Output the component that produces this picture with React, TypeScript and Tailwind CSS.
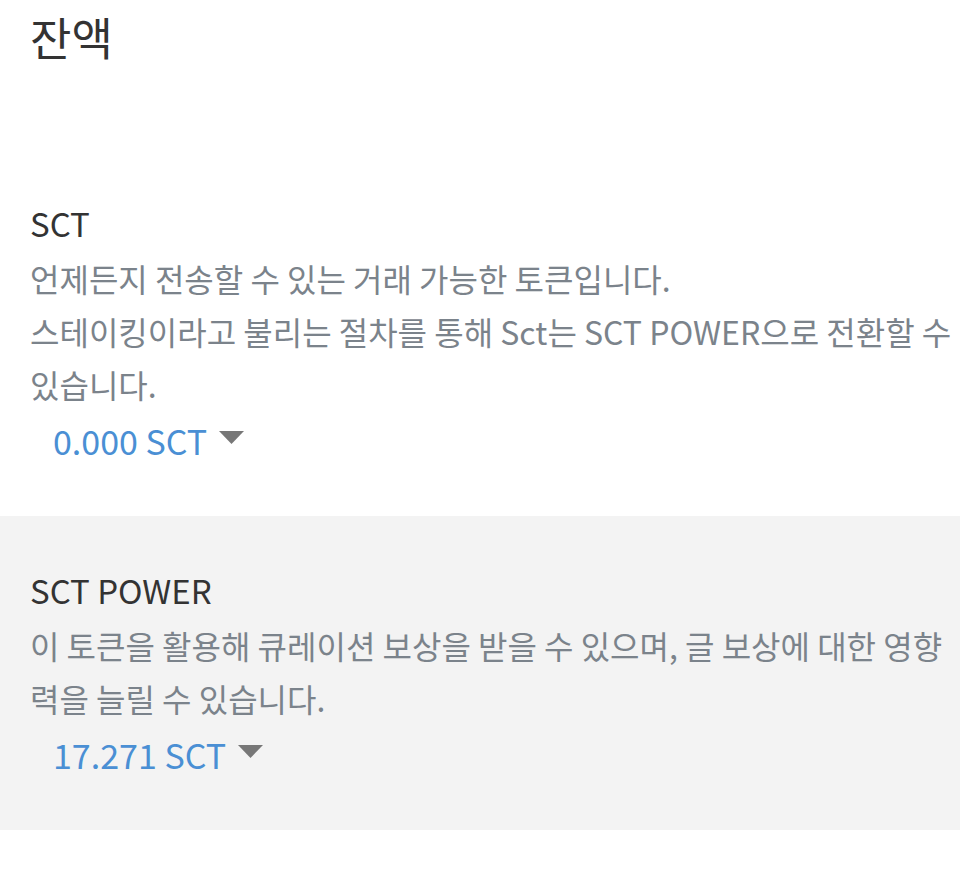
import React from 'react';

interface TokenBalance {
  name: string;
  lines: string[];
  amount: string;
  shaded?: boolean;
}

const balances: TokenBalance[] = [
  {
    name: 'SCT',
    lines: [
      '언제든지 전송할 수 있는 거래 가능한 토큰입니다.',
      '스테이킹이라고 불리는 절차를 통해 Sct는 SCT POWER으로 전환할 수 있습니다.',
    ],
    amount: '0.000 SCT',
  },
  {
    name: 'SCT POWER',
    lines: ['이 토큰을 활용해 큐레이션 보상을 받을 수 있으며, 글 보상에 대한 영향력을 늘릴 수 있습니다.'],
    amount: '17.271 SCT',
    shaded: true,
  },
];

const Caret: React.FC = () => (
  <svg width="25" height="13" viewBox="0 0 25 13" className="ml-[12px] mb-[7px]">
    <path d="M0 0 H25 L12.5 13 Z" fill="#777777" />
  </svg>
);

const BalanceRow: React.FC<{ item: TokenBalance }> = ({ item }) => (
  <section className={`pl-[30px] pt-[45px] pb-[46px] ${item.shaded ? 'bg-[#f3f3f3]' : 'bg-white'}`}>
    <h3 className="text-[33px] leading-[58px] text-[#333333]">{item.name}</h3>
    {item.lines.map((line) => (
      <p key={line} className="text-[32px] leading-[53px] text-[#7b838b]">
        {line}
      </p>
    ))}
    <button className="flex items-center pl-[23px] text-[34px] leading-[59px] text-[#4a8fd4]">
      {item.amount}
      <Caret />
    </button>
  </section>
);

export default function App() {
  return (
    <div
      className="w-[960px] min-h-[885px] bg-white"
      style={{ fontFamily: '"Noto Sans CJK KR", "Noto Sans", sans-serif' }}
    >
      <h2 className="pl-[30px] pt-[6px] text-[45px] leading-[62px] text-[#333333]">잔액</h2>
      <div className="mt-[81px]">
        {balances.map((b) => (
          <BalanceRow key={b.name} item={b} />
        ))}
      </div>
    </div>
  );
}
